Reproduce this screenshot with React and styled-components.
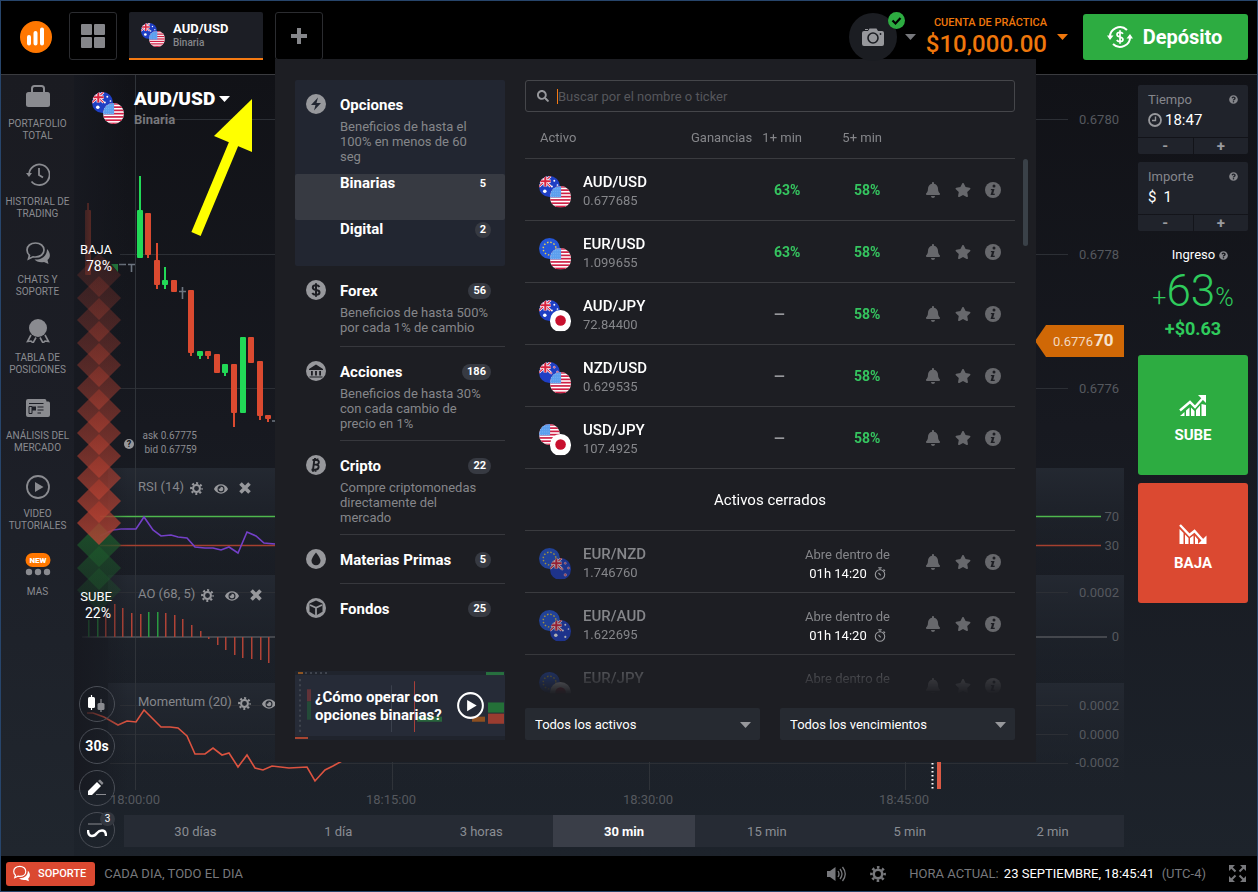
import React, { useState } from 'react'
import styled, { createGlobalStyle } from 'styled-components'
import { FaBell, FaStar, FaQuestionCircle, FaSearch, FaEye } from 'react-icons/fa'

const GlobalStyle = createGlobalStyle`
    *, *::before, *::after { box-sizing: border-box; }
    body { margin: 0; background: #000; font-family: Roboto, "Liberation Sans", sans-serif; color: #fff; }
    button, input, select { font: inherit; color: inherit; margin: 0; padding: 0; border: 0; background: none; }
    button { cursor: pointer; }
    svg { display: block; flex: none; }
`

const Page = styled.div`
    display: flex;
    flex-direction: column;
    min-height: 100vh;
    border: 1px solid #27456b;
    background: #000;
`

/* ---------- header ---------- */

const Header = styled.header`
    position: relative;
    z-index: 2;
    display: flex;
    align-items: flex-start;
    gap: 12px;
    height: 74px;
    padding: 11px 9px 0 19px;
    border-bottom: 1px solid #3a3b3f;
`

const Logo = styled.a`
    display: flex;
    align-items: center;
    height: 50px;
    margin-right: 5px;
`

const SquareButton = styled.button`
    display: grid;
    place-items: center;
    width: 48px;
    height: 48px;
    border: 1px solid #2b2c30;
    border-radius: 3px;
    color: #85868a;
`

const AssetTab = styled.button`
    display: flex;
    align-items: center;
    gap: 8px;
    width: 134px;
    height: 48px;
    padding-left: 12px;
    border-bottom: 2px solid #f57a12;
    border-radius: 2px 2px 0 0;
    background: #1c1e25;
    text-align: left;
`

const TabText = styled.span`
    display: flex;
    flex-direction: column;
    font-size: 13px;
    font-weight: 700;
    line-height: 15px;

    small {
        font-size: 10px;
        font-weight: 500;
        line-height: 14px;
        color: #85868a;
    }
`

const AddSlot = styled.div`
    position: relative;
    flex: 1;
`

const Avatar = styled.button`
    position: relative;
    display: grid;
    place-items: center;
    width: 48px;
    height: 48px;
    margin-top: 1px;
    border-radius: 50%;
    background: #1b1d22;
`

const Verified = styled.span`
    position: absolute;
    top: -1px;
    right: -8px;
`

const CaretBox = styled.span`
    display: flex;
    align-items: center;
    height: 50px;
    margin-left: -4px;
    color: ${props => props.color};
`

const Account = styled.button`
    display: flex;
    flex-direction: column;
    align-items: flex-end;
    padding-top: 4px;
    color: #ef770c;
    font-size: 11px;
    font-weight: 500;
    line-height: 14px;

    strong {
        font-size: 24px;
        font-weight: 500;
        line-height: 28px;
    }
`

const AccountGroup = styled.div`
    display: flex;
    gap: 14px;
    margin-left: -2px;
`

const Deposit = styled.button`
    display: flex;
    align-items: center;
    justify-content: center;
    gap: 10px;
    width: 165px;
    height: 46px;
    margin: 2px 0 0 3px;
    padding-right: 2px;
    border-radius: 3px;
    background: #2dac41;
    font-size: 20px;
    font-weight: 700;
`

/* ---------- sidebar ---------- */

const Body = styled.div`
    display: flex;
    flex: 1;
    background: linear-gradient(#111217, #171920 45%, #1d232b);
`

const Sidebar = styled.nav`
    flex: none;
    width: 73px;
    background: linear-gradient(#1a1b21, #1c1e26 45%, #20262e);
`

const SideLink = styled.a`
    display: flex;
    flex-direction: column;
    align-items: center;
    gap: 9px;
    height: 78px;
    padding-top: 10px;
    color: #8a8b90;
    font-size: 10px;
    line-height: 12px;
    text-align: center;
    text-decoration: none;

    span { max-width: 66px; }
`

/* ---------- chart ---------- */

const ChartColumn = styled.main`
    display: flex;
    flex-direction: column;
    position: relative;
    flex: 1;
    min-width: 0;
    padding-bottom: 9px;
`

const Chart = styled.section`
    position: relative;
    display: grid;
    flex: 1;
    grid-template-rows: 393fr 107fr 108fr 132fr;
    min-height: 740px;
`

const ChartSvg = styled.svg`
    position: absolute;
    inset: 0;
    width: 100%;
    height: 100%;
    font-size: 13px;
`

const Pane = styled.div`
    position: relative;
    display: flex;
    align-items: flex-start;
    gap: 11px;
    padding: 10px 0 0 64px;
    color: #85868b;
    font-size: 13px;
    line-height: 18px;
`

const PaneTitle = styled.span`
    margin-right: -5px;
`

const PaneButton = styled.button`
    padding-top: 4px;
    color: #97989c;
`

const PairButton = styled.button`
    position: relative;
    display: flex;
    align-items: flex-start;
    gap: 10px;
    height: 40px;
    margin: 17px 0 0 18px;
    justify-self: start;
    text-align: left;
`

const PairText = styled.span`
    display: flex;
    flex-direction: column;
    font-size: 13px;
    font-weight: 700;
    line-height: 20px;
    color: #77787c;

    strong {
        display: flex;
        align-items: center;
        gap: 4px;
        margin-top: -4px;
        font-size: 19px;
        line-height: 22px;
        color: #fff;
    }
`

const ToolDock = styled.div`
    position: absolute;
    left: 5px;
    bottom: 8px;
    display: flex;
    flex-direction: column;
    gap: 6px;
`

const ToolButton = styled.button`
    position: relative;
    display: grid;
    place-items: center;
    width: 36px;
    height: 36px;
    border: 1px solid #4a4e56;
    border-radius: 50%;
    font-size: 14px;
    font-weight: 700;
`

const ToolCount = styled.span`
    position: absolute;
    top: -1px;
    right: -1px;
    width: 15px;
    height: 14px;
    border-radius: 7px;
    background: #33373f;
    font-size: 10px;
    font-weight: 400;
    line-height: 14px;
`

const RangeBar = styled.div`
    display: flex;
    height: 32px;
    margin-left: 50px;
    background: #262b34;
`

const RangeButton = styled.button`
    flex: 1;
    background: ${props => props.$active ? '#3a3e48' : 'transparent'};
    color: ${props => props.$active ? '#fff' : '#8a8d93'};
    font-size: 13px;
    font-weight: ${props => props.$active ? 700 : 400};
`

/* ---------- trade panel ---------- */

const TradePanel = styled.aside`
    display: flex;
    flex: none;
    flex-direction: column;
    gap: 8px;
    width: 133px;
    padding: 10px 9px 0 14px;
`

const Field = styled.div`
    display: grid;
    grid-template-columns: 1fr 1fr;
    gap: 1px;
    overflow: hidden;
    border-radius: 2px;
`

const FieldTop = styled.div`
    grid-column: 1 / -1;
    height: 52px;
    padding: 4px 10px 0;
    background: #20232b;
`

const FieldLabel = styled.label`
    display: flex;
    align-items: center;
    justify-content: space-between;
    height: 20px;
    color: #85868b;
    font-size: 13px;
`

const FieldValue = styled.div`
    display: flex;
    align-items: center;
    gap: ${props => props.$gap};
    height: 22px;
    font-size: 15px;

    input {
        width: 60px;
        outline: 0;
    }
`

const StepButton = styled.button`
    height: 16px;
    background: #20232b;
    color: #9a9b9f;
    font-size: 15px;
    font-weight: 700;
    line-height: 16px;
`

const Income = styled.div`
    display: flex;
    flex-direction: column;
    align-items: center;
    height: 108px;
    padding-top: 7px;
    color: #2fcb5c;
    font-size: 18px;
    font-weight: 700;
`

const IncomeLabel = styled.span`
    display: flex;
    align-items: center;
    gap: 4px;
    margin-left: 14px;
    color: #fff;
    font-size: 13px;
    font-weight: 400;
    line-height: 18px;

    svg { color: #8a8b90; }
`

const IncomeValue = styled.span`
    font-size: 25px;
    font-weight: 300;
    line-height: 30px;

    b {
        font-size: 44px;
        font-weight: 300;
        line-height: 54px;
    }
`

const TradeButton = styled.button`
    display: flex;
    flex-direction: column;
    align-items: center;
    justify-content: center;
    gap: 9px;
    height: 120px;
    padding-top: 8px;
    border-radius: 3px;
    background: ${props => props.$up ? '#2dac41' : '#db4931'};
    color: #fff;
    font-size: 15px;
    font-weight: 700;
`

/* ---------- asset popup ---------- */

const Popup = styled.section`
    position: absolute;
    top: 47px;
    left: 0;
    display: grid;
    grid-template-columns: 210px 1fr;
    gap: 20px;
    width: calc(100vw - 497px);
    min-width: 761px;
    padding: 21px 21px 22px 20px;
    background: #1d1e23;
`

const Categories = styled.div`
    display: flex;
    flex-direction: column;
`

const OpenGroup = styled.div`
    border-radius: 2px;
    background: #222631;
`

const Category = styled.button`
    display: grid;
    grid-template-columns: 20px 1fr;
    column-gap: 14px;
    width: 100%;
    padding: 15px 0 0 11px;
    text-align: left;

    > svg { margin-top: -1px; }
`

const CategoryText = styled.span`
    display: block;
    padding-bottom: ${props => props.$short ? '13px' : '9px'};
    border-bottom: 1px solid ${props => props.$line ? '#37383d' : 'transparent'};
`

const CategoryTitle = styled.span`
    display: flex;
    align-items: center;
    justify-content: space-between;
    height: 20px;
    padding-right: 14px;
    font-size: 15px;
    font-weight: 700;
`

const CategoryNote = styled.span`
    display: block;
    min-height: 32px;
    margin-top: 4px;
    padding-right: 15px;
    color: #85868a;
    font-size: 13px;
    line-height: 15px;
`

const SubCategory = styled.button`
    display: flex;
    justify-content: space-between;
    width: 100%;
    height: 46px;
    padding: 0 14px 0 45px;
    border-radius: 2px;
    background: ${props => props.$active ? '#373a42' : 'transparent'};
    font-size: 15px;
    font-weight: 700;
    line-height: 18px;
`

const Badge = styled.span`
    min-width: 16px;
    height: 16px;
    padding: 0 5px;
    border-radius: 8px;
    background: ${props => props.$flat ? 'transparent' : '#373a42'};
    font-size: 11px;
    font-weight: 700;
    line-height: 16px;
    text-align: center;
`

const SubBadge = styled(Badge)`
    margin-top: 2px;
`

const Video = styled.button`
    position: relative;
    display: flex;
    align-items: center;
    justify-content: space-between;
    height: 69px;
    margin-top: auto;
    padding: 0 21px 0 20px;
    overflow: hidden;
    background: #262b37;
    font-size: 15px;
    font-weight: 700;
    line-height: 18px;
    text-align: left;
    white-space: nowrap;

    span, svg { position: relative; }
`

const VideoArt = styled.svg`
    && {
        position: absolute;
        inset: 0;
        width: 100%;
        height: 100%;
    }
`

const Assets = styled.div`
    position: relative;
    display: flex;
    flex-direction: column;
`

const Search = styled.label`
    display: flex;
    align-items: center;
    gap: 8px;
    height: 32px;
    padding: 0 11px;
    border: 1px solid #45464a;
    border-radius: 3px;
    color: #97989c;

    input {
        flex: 1;
        height: 15px;
        border-left: 1px solid #f57a12;
        outline: 0;
        font-size: 13px;
        line-height: 15px;
    }

    input::placeholder { color: #56575c; opacity: 1; }
`

const ListArea = styled.div`
    height: 588px;
    overflow: hidden;
    mask-image: linear-gradient(#000 538px, transparent 582px);
`

const Table = styled.table`
    width: 100%;
    border-collapse: separate;
    border-spacing: 0;
    table-layout: fixed;
    font-size: 13px;

    col:nth-child(2) { width: 120px; }
    col:nth-child(3) { width: 88px; }
    col:nth-child(4) { width: 125px; }
`

const HeadCell = styled.th`
    height: 47px;
    padding: ${props => props.$pad || '0'};
    padding-top: 4px;
    border-bottom: 1px solid #3a3b3f;
    color: #85868a;
    font-weight: 400;
    text-align: ${props => props.$right ? 'right' : 'left'};
    white-space: nowrap;

    span { margin-left: 7px; }
`

const Cell = styled.td`
    height: 62px;
    padding: ${props => props.$pad || '0'};
    border-bottom: 1px solid #3a3b3f;
    text-align: ${props => props.$right ? 'right' : 'left'};
`

const AssetCell = styled.div`
    display: flex;
    align-items: center;
    gap: 12px;
    min-height: 41px;
    padding: 4px 0 0 14px;
    color: #85868a;
    line-height: 19px;

    > div { min-height: 37px; }

    strong {
        display: block;
        color: ${props => props.$closed ? '#85868a' : '#fff'};
        font-size: 15px;
        font-weight: 500;
        line-height: 18px;
    }

    > span:first-child { opacity: ${props => props.$closed ? 0.65 : 1}; }
`

const Profit = styled.span`
    display: inline-block;
    width: 28px;
    color: ${props => props.$none ? '#97989c' : '#35c45f'};
    font-size: 14px;
    font-weight: 700;
    text-align: left;
`

const Opens = styled.div`
    display: inline-block;
    min-height: 42px;
    padding-top: 4px;
    color: #85868a;
    line-height: 19px;
    text-align: center;

    time {
        display: flex;
        align-items: center;
        justify-content: center;
        gap: 7px;
        color: #fff;
    }

    svg { color: #97989c; }
`

const Actions = styled.div`
    display: flex;
    gap: 14px;
    padding-left: 35px;
    color: #67686c;
`

const ClosedTitle = styled.td`
    height: 62px;
    border-bottom: 1px solid #3a3b3f;
    font-size: 15px;
    text-align: center;
`

const Thumb = styled.span`
    position: absolute;
    top: 79px;
    right: -13px;
    width: 5px;
    height: 87px;
    border-radius: 3px;
    background: #3a4148;
`

const Filters = styled.div`
    display: grid;
    grid-template-columns: 1fr 1fr;
    gap: 20px;
    padding-top: 8px;
`

const Filter = styled.div`
    position: relative;

    select {
        width: 100%;
        height: 32px;
        padding: 0 10px;
        border-radius: 2px;
        appearance: none;
        background: #262a31;
        font-size: 13px;
    }

    svg {
        position: absolute;
        top: 14px;
        right: 9px;
        color: #97989c;
        pointer-events: none;
    }
`

/* ---------- footer ---------- */

const Footer = styled.footer`
    display: flex;
    align-items: center;
    gap: 9px;
    height: 35px;
    padding: 0 11px 0 5px;
    color: #77787c;
    font-size: 13px;
`

const Support = styled.button`
    display: flex;
    align-items: center;
    gap: 8px;
    height: 24px;
    padding: 0 9px 0 7px;
    border-radius: 3px;
    background: #db4931;
    color: #fff;
    font-size: 11px;
    font-weight: 500;
`

const FooterRight = styled.div`
    display: flex;
    align-items: center;
    gap: 23px;
    margin-left: auto;
`

const Clock = styled.span`
    b {
        margin: 0 4px 0 2px;
        color: #fff;
        font-weight: 400;
    }
`

/* ---------- flags ---------- */

const FlagStack = styled.span`
    display: grid;
    flex: none;
    width: ${props => props.$size}px;
    height: ${props => props.$size}px;

    > svg {
        grid-area: 1 / 1;
        width: 66%;
        height: 66%;
        border-radius: 50%;
    }

    > svg:last-child {
        align-self: end;
        justify-self: end;
    }
`

const Jack = () => (
    <g>
        <path d="M0 0L11 10M11 0L0 10" stroke="#fff" strokeWidth="2.4" />
        <path d="M0 0L11 10M11 0L0 10" stroke="#d8223f" strokeWidth="1" />
        <path d="M6 0V10M0 5H11" stroke="#fff" strokeWidth="3.4" />
        <path d="M6 0V10M0 5H11" stroke="#d8223f" strokeWidth="2" />
    </g>
)

function Flag({ code }) {
    return (
        <svg viewBox="0 0 20 20" aria-hidden="true">
            {code === 'USD' && (
                <>
                    <rect width="20" height="20" fill="#fff" />
                    {[0, 1, 2, 3, 4, 5, 6].map(i => <rect key={i} y={i * 3.1} width="20" height="1.6" fill="#d01f45" />)}
                    <rect width="10.5" height="10.8" fill="#5c9fee" />
                    <path d="M1 2.5H10M1 5H10M1 7.5H10M1 10H10" stroke="#86b9f5" strokeWidth="0.8" strokeDasharray="0.8 1.2" />
                </>
            )}
            {code === 'AUD' && (
                <>
                    <rect width="20" height="20" fill="#1f3fc4" />
                    <Jack />
                    <g fill="#fff">
                        <circle cx="5.5" cy="14.5" r="1.7" />
                        <circle cx="14.5" cy="4.5" r="0.9" />
                        <circle cx="17.5" cy="8.5" r="0.8" />
                        <circle cx="12.2" cy="10" r="0.9" />
                        <circle cx="14.5" cy="16" r="1" />
                    </g>
                </>
            )}
            {code === 'NZD' && (
                <>
                    <rect width="20" height="20" fill="#1f3fc4" />
                    <Jack />
                    <g fill="#e0486a" stroke="#fff" strokeWidth="0.4">
                        <circle cx="14.5" cy="5" r="1" />
                        <circle cx="17.5" cy="9.5" r="1" />
                        <circle cx="11.5" cy="10.5" r="1" />
                        <circle cx="14.5" cy="16" r="1.2" />
                    </g>
                </>
            )}
            {code === 'EUR' && (
                <>
                    <rect width="20" height="20" fill="#2456d8" />
                    <circle cx="10" cy="10" r="6" fill="none" stroke="#e8cf4a" strokeWidth="1.4" strokeDasharray="1.4 1.74" />
                </>
            )}
            {code === 'JPY' && (
                <>
                    <rect width="20" height="20" fill="#fff" />
                    <circle cx="10" cy="10" r="5" fill="#c8102e" />
                </>
            )}
        </svg>
    )
}

const FlagPair = ({ pair, size = 32 }) => (
    <FlagStack $size={size}>
        {pair.split('/').map(code => <Flag key={code} code={code} />)}
    </FlagStack>
)

/* ---------- icons ---------- */

const Caret = () => <svg width="11" height="6" viewBox="0 0 11 6"><path d="M0 0H11L5.5 6Z" fill="currentColor" /></svg>

const LogoIcon = () => (
    <svg width="32" height="32" viewBox="0 0 32 32">
        <circle cx="16" cy="16" r="16" fill="#ff7700" />
        <path d="M9 16V22.5M15.5 12V22.5M22 8.5V22.5" stroke="#fff" strokeWidth="4" strokeLinecap="round" />
    </svg>
)

const GearIcon = ({ size }) => (
    <svg width={size} height={size} viewBox="0 0 14 14" fill="none" stroke="currentColor">
        <circle cx="7" cy="7" r="3.700" strokeWidth="2.200" />
        <circle cx="7" cy="7" r="5.800" strokeWidth="2.200" strokeDasharray="2.200 2.355" strokeDashoffset="1.100" />
    </svg>
)

const CloseIcon = () => (
    <svg width="12" height="12" viewBox="0 0 12 12">
        <path d="M1.500 1.500L10.500 10.500M10.500 1.500L1.500 10.500" stroke="currentColor" strokeWidth="3.600" />
    </svg>
)

const InfoIcon = () => (
    <svg width="16" height="16" viewBox="0 0 16 16">
        <circle cx="8" cy="8" r="8" fill="currentColor" />
        <circle cx="9" cy="4" r="1.500" fill="#1d1e23" />
        <path d="M6 7H9.500L8.200 11.800H10L9.500 13H5.500L7 8.200H5.700Z" fill="#1d1e23" />
    </svg>
)

const ChatIcon = ({ size = 24 }) => (
    <svg width={size} height={size} viewBox="0 0 24 24">
        <path d="M21 8C25 12 24.500 17 21.500 19L22.500 23L18 21C14 22 10 20.500 8.500 18.500C16 19 21 15 21 8Z" fill="currentColor" />
        <path d="M9.500 2C4.500 2 1 5 1 9C1 11.200 2 13 3.500 14.300L2.500 18L7 15.800C7.800 16 8.600 16 9.500 16C14.500 16 18 13 18 9S14.500 2 9.500 2Z" fill="none" stroke="currentColor" strokeWidth="1.700" />
    </svg>
)

const PlayIcon = ({ size }) => (
    <svg width={size} height={size} viewBox="0 0 24 24">
        <circle cx="12" cy="12" r="11" fill="none" stroke="currentColor" strokeWidth="1.800" />
        <path d="M9 7L17.500 12L9 17Z" fill="currentColor" />
    </svg>
)

const sideIcons = {
    case: (
        <svg width="24" height="24" viewBox="0 0 24 24">
            <rect y="7" width="24" height="15" rx="2.5" fill="currentColor" />
            <path d="M6 8V3.500Q6 1 8.500 1H15.500Q18 1 18 3.500V8" fill="none" stroke="currentColor" strokeWidth="2" />
        </svg>
    ),
    history: (
        <svg width="24" height="24" viewBox="0 0 24 24" fill="none" stroke="currentColor" strokeWidth="1.800">
            <path d="M3 11A10.300 10.300 0 1 1 5.500 18.500" />
            <path d="M13 5V12L17 14.500" />
            <path d="M0 10H6L3 14Z" fill="currentColor" stroke="none" />
        </svg>
    ),
    chat: <ChatIcon />,
    award: (
        <svg width="24" height="24" viewBox="0 0 24 24">
            <circle cx="12" cy="9" r="9" fill="currentColor" />
            <path d="M5 16L1.500 22.500L5 22L7 24L10 18.500M19 16L22.500 22.500L19 22L17 24L14 18.500" fill="none" stroke="currentColor" strokeWidth="1.600" />
        </svg>
    ),
    news: (
        <svg width="24" height="24" viewBox="0 0 24 24">
            <path d="M2 2H19Q20.500 2 20.500 4.500H22.500Q24 4.500 24 6.500V18Q24 20 22 20H2Q0 20 0 18V4Q0 2 2 2Z" fill="currentColor" />
            <path d="M3 6.500H17.500M11.500 10H17.500M11.500 13H17.500M11.500 16H15" stroke="#1c1e26" strokeWidth="1.200" />
            <path d="M3 9.500H6V16.500H3Z" fill="currentColor" stroke="#1c1e26" strokeWidth="1" />
            <rect x="6" y="9.500" width="4" height="4" fill="#1c1e26" />
        </svg>
    ),
    play: <PlayIcon size={24} />,
    more: (
        <svg width="26" height="24" viewBox="0 0 26 24">
            <rect x="0.500" y="0" width="25" height="14" rx="7" fill="#ff7700" />
            <text x="13" y="10" fill="#fff" fontSize="8" fontWeight="900" textAnchor="middle">NEW</text>
            <g fill="currentColor">
                <circle cx="4" cy="19" r="3.200" />
                <circle cx="13" cy="19" r="3.200" />
                <circle cx="22" cy="19" r="3.200" />
            </g>
        </svg>
    ),
}

const TrendIcon = ({ up }) => (
    <svg width="28" height="22" viewBox="0 0 28 22">
        {up ? (
            <>
                <path d="M1 15.500L11 7L16 12L24 3" fill="none" stroke="currentColor" strokeWidth="2.400" />
                <path d="M19 0H27V8Z" fill="currentColor" />
                <path d="M1 21L5.500 17V21ZM7 21V15.500L10.500 12.500V21ZM12 21V12.500L15.500 16V21ZM17 21V15L21 10.500V21ZM22.500 21V9L27 10V21Z" fill="currentColor" />
            </>
        ) : (
            <>
                <path d="M1 2L10.500 12L15.500 8L24 17.500" fill="none" stroke="currentColor" strokeWidth="2.400" />
                <path d="M19 21H27.500V12.500Z" fill="currentColor" />
                <path d="M0.500 21V6L4.500 10V21ZM6 21V11.500L9.500 15V21ZM11 21V15L14.500 12.500V21ZM16 21V13L19 16.500V21Z" fill="currentColor" />
            </>
        )}
    </svg>
)

const categoryShapes = {
    bolt: <path d="M12 3.500L5 11H9.500L8 16.500L15 9H10.500Z" fill="#222631" />,
    dollar: <path d="M13.500 7Q12.500 5.300 10 5.300Q6.800 5.300 6.800 7.600Q6.800 9.600 10 10Q13.500 10.400 13.500 12.400Q13.500 14.700 10 14.700Q7.300 14.700 6.300 12.900M10 3.300V16.700" fill="none" stroke="#1d1e23" strokeWidth="2" />,
    bank: <path d="M3 8L10 3.500L17 8V9H3ZM5 10H6.800V14.500H5ZM9.100 10H10.900V14.500H9.100ZM13.200 10H15V14.500H13.200ZM3.500 15.500H16.500V16.500H3.500Z" fill="#1d1e23" />,
    bitcoin: <path d="M6.500 5H10.500Q13.300 5.300 12.800 7.600Q12.400 9.500 9.500 9.600Q13 9.700 12.600 12.300Q12 15 8.500 14.800H5.500M8.300 5L7 14.800M9 3V5M11.500 3.400V5M7 14.800V16.800M9.500 14.800V16.800M7.500 9.600H10" fill="none" stroke="#1d1e23" strokeWidth="1.900" />,
    drop: <path d="M10 3.500Q14.500 9 14.500 11.800A4.500 4.500 0 0 1 5.500 11.800Q5.500 9 10 3.500Z" fill="#1d1e23" />,
    cube: <path d="M4 7L10 9.700L16 7M10 9.700V18" fill="none" stroke="#97989c" strokeWidth="1.800" />,
}

const CategoryIcon = ({ shape }) => (
    <svg width="20" height="20" viewBox="0 0 20 20">
        <circle cx="10" cy="10" r="10" fill="#97989c" />
        {shape === 'cube' && <path d="M10 2.500L16.500 5.500V13.800L10 17.500L3.500 13.800V5.500Z" fill="#1d1e23" />}
        {categoryShapes[shape]}
    </svg>
)

const StopwatchIcon = () => (
    <svg width="12" height="13" viewBox="0 0 12 13" fill="none" stroke="currentColor" strokeWidth="1.100">
        <circle cx="6" cy="7.500" r="4.700" />
        <path d="M4.200 0.800H7.800M6 1V3M9.500 2.500L11 4M4.500 6L6.800 8.300" />
    </svg>
)

/* ---------- data ---------- */

const sideItems = [
    ['case', 'PORTAFOLIO TOTAL'],
    ['history', 'HISTORIAL DE TRADING'],
    ['chat', 'CHATS Y SOPORTE'],
    ['award', 'TABLA DE POSICIONES'],
    ['news', 'ANÁLISIS DEL MERCADO'],
    ['play', 'VIDEO TUTORIALES'],
    ['more', 'MAS'],
]

const categories = [
    { shape: 'dollar', title: 'Forex', count: 56, note: 'Beneficios de hasta 500% por cada 1% de cambio' },
    { shape: 'bank', title: 'Acciones', count: 186, note: 'Beneficios de hasta 30% con cada cambio de precio en 1%' },
    { shape: 'bitcoin', title: 'Cripto', count: 22, note: 'Compre criptomonedas directamente del mercado' },
    { shape: 'drop', title: 'Materias Primas', count: 5 },
    { shape: 'cube', title: 'Fondos', count: 25 },
]

const openAssets = [
    ['AUD/USD', '0.677685', '63%', '58%'],
    ['EUR/USD', '1.099655', '63%', '58%'],
    ['AUD/JPY', '72.84400', '', '58%'],
    ['NZD/USD', '0.629535', '', '58%'],
    ['USD/JPY', '107.4925', '', '58%'],
]

const closedAssets = [
    ['EUR/NZD', '1.746760', '01h 14:20'],
    ['EUR/AUD', '1.622695', '01h 14:20'],
    ['EUR/JPY'],
]

const ranges = ['30 días', '1 día', '3 horas', '30 min', '15 min', '5 min', '2 min']

// x, wick top, wick bottom, body top, body bottom, colour
const candles = [
    [88, 203, 275, 210, 275, 'r'],
    [140, 176, 258, 210, 258, 'g'],
    [148, 213, 258, 213, 255, 'r'],
    [157, 243, 289, 260, 285, 'r'],
    [165, 267, 289, 280, 285, 'g'],
    [174, 280, 292, 280, 292, 'r'],
    [191, 290, 356, 290, 353, 'r'],
    [200, 351, 359, 351, 356, 'g'],
    [208, 351, 359, 351, 356, 'r'],
    [217, 354, 373, 354, 373, 'r'],
    [225, 364, 376, 364, 373, 'g'],
    [234, 364, 427, 364, 413, 'r'],
    [243, 337, 413, 337, 413, 'g'],
    [251, 337, 363, 337, 363, 'r'],
    [260, 361, 420, 361, 416, 'r'],
    [268, 415, 422, 415, 419, 'r'],
]

const aoBars = [
    [88, 620, 'g'], [97, 618, 'g'], [105, 612], [114, 604], [122, 608], [131, 613], [140, 614], [148, 612, 'g'],
    [157, 612, 'g'], [165, 613], [174, 615], [182, 619], [191, 625], [200, 631], [208, 639], [217, 645], [225, 650],
    [234, 655], [242, 658], [251, 659], [260, 660], [268, 663],
]

const redDiamonds = [275, 298, 320, 343, 365, 388, 411, 433, 456, 478, 501, 523]
const greenDiamonds = [590, 568, 545]

const candleColor = { r: '#db4a30', g: '#22d957' }

const diamond = y => `M77 ${y}L99 ${y - 22}L121 ${y}L99 ${y + 22}Z`

function ChartDrawing() {
    return (
        <ChartSvg viewBox="74 75 1050 740" preserveAspectRatio="xMidYMin meet">
            <defs>
                <linearGradient id="pane" x2="0" y2="1">
                    <stop offset="0" stopColor="#252a33" stopOpacity="0.9" />
                    <stop offset="1" stopColor="#1d222a" stopOpacity="0.1" />
                </linearGradient>
                <linearGradient id="fade">
                    <stop offset="0" stopColor="#171920" />
                    <stop offset="1" stopColor="#171920" stopOpacity="0" />
                </linearGradient>
                <linearGradient id="red" x2="0" y2="1">
                    <stop offset="0" stopColor="#a83a2c" stopOpacity="0.75" />
                    <stop offset="1" stopColor="#c04838" stopOpacity="0.9" />
                </linearGradient>
                <linearGradient id="green" x2="0" y2="1">
                    <stop offset="0" stopColor="#1d5c2c" stopOpacity="0.9" />
                    <stop offset="1" stopColor="#1e5a2c" stopOpacity="0.6" />
                </linearGradient>
            </defs>

            <g fill="url(#pane)">
                <rect x="108" y="468" width="1016" height="107" />
                <rect x="108" y="575" width="1016" height="108" />
                <rect x="108" y="683" width="1016" height="107" />
            </g>

            <path d="M160 119.500H1068M120 254.500H1068M120 388.500H1068M74 592.500H1068M120 705.500H1068M110 734.500H1068M110 763.500H1068" stroke="#2c2f35" />
            <path d="M135.500 75V790M392.500 75V790M649.500 75V790M905.500 75V790" stroke="#2f3339" />
            <path d="M82 637H1107" stroke="#44474d" strokeWidth="2" />
            <path d="M100 516.500H1101" stroke="#4fb84e" strokeWidth="1.600" />
            <path d="M100 545.500H1101" stroke="#a5402f" strokeWidth="1.600" />

            <g fill="#55585e" textAnchor="end">
                <text x="1119" y="124">0.6780</text>
                <text x="1119" y="259">0.6778</text>
                <text x="1119" y="393">0.6776</text>
                <text x="1119" y="521">70</text>
                <text x="1119" y="550">30</text>
                <text x="1119" y="597">0.0002</text>
                <text x="1119" y="641">0</text>
                <text x="1119" y="710">0.0002</text>
                <text x="1119" y="739">0.0000</text>
                <text x="1119" y="767">-0.0002</text>
            </g>
            <g fill="#55585e" textAnchor="middle">
                <text x="135" y="804">18:00:00</text>
                <text x="391" y="804">18:15:00</text>
                <text x="648" y="804">18:30:00</text>
                <text x="904" y="804">18:45:00</text>
            </g>

            {aoBars.map(([x, y, color]) => (
                <rect key={x} x={x} y={Math.min(y, 637)} width="1.5" height={Math.abs(637 - y)} fill={color ? '#2a9a41' : '#b04336'} />
            ))}
            <polyline fill="none" stroke="#7440c8" strokeWidth="1.6" points="100,536 113,530 121,529 136,529 144,517 153,530 161,536 171,535 178,537 187,538 195,547 205,548 213,548 221,550 229,547 238,553 247,532 256,536 264,543 275,544" />
            <polyline fill="none" stroke="#dc5340" strokeWidth="1.6" points="87,713 93,713 104,717 118,725 127,721 136,722 144,710 161,727 170,727 178,728 187,736 195,754 205,754 213,748 222,755 229,753 238,767 247,755 255,768 263,770 272,766 289,768 307,767 315,781 325,770 333,766 342,761 350,758" />

            {candles.map(([x, top, bottom, bodyTop, bodyBottom, color]) => (
                <g key={x} fill={candleColor[color]}>
                    <rect x={x - 1} y={top} width="2" height={bottom - top} />
                    <rect x={x - 3} y={bodyTop} width="6" height={bodyBottom - bodyTop} rx="1" />
                </g>
            ))}
            <path d="M179 291.500H186M182.500 287V299M119 264.500H126M128 264.500H135M131.500 264V272M272 421H275" stroke="#6d7580" strokeWidth="1.600" />
            <path d="M111 264H118V272Z" fill="#258a41" />
            <rect x="74" y="75" width="54" height="715" fill="url(#fade)" />

            {greenDiamonds.map((y, i) => <path key={y} d={diamond(y)} fill="url(#green)" opacity={0.4 + i * 0.25} />)}
            {redDiamonds.map((y, i) => <path key={y} d={diamond(y)} fill="url(#red)" opacity={0.26 + i * 0.055} />)}

            <g fill="#fff" textAnchor="end">
                <text x="112" y="254">BAJA</text>
                <text x="112" y="271" fontSize="14">78%</text>
                <text x="112" y="601">SUBE</text>
                <text x="111" y="618" fontSize="14">22%</text>
            </g>
            <g fill="#8a8b90" fontSize="10" textAnchor="end">
                <text x="197" y="439">ask 0.67775</text>
                <text x="197" y="453">bid 0.67759</text>
            </g>
            <circle cx="129" cy="444" r="5" fill="#97989c" />
            <text x="129" y="447" fontSize="9" fontWeight="700" textAnchor="middle" fill="#171920">?</text>

            <path d="M932.500 763V790" stroke="#fff" strokeWidth="2" strokeDasharray="1.500 2.500" />
            <rect x="937" y="760" width="4" height="29" fill="#db5a45" />

            <path d="M1035 341L1046 325H1124V357H1046Z" fill="#d06806" />
            <text x="1053" y="346" fill="#f3d9c0">0.6776</text>
            <text x="1094" y="346" fill="#f7e2cd" fontSize="17" fontWeight="700">70</text>

            <path d="M196 234L234 143" stroke="#ffff00" strokeWidth="10" />
            <path d="M252 99L214 136L252 152Z" fill="#ffff00" />
        </ChartSvg>
    )
}

const Indicator = ({ title, closable = true }) => (
    <Pane>
        <PaneTitle>{title}</PaneTitle>
        <PaneButton aria-label="Ajustes"><GearIcon size={13} /></PaneButton>
        <PaneButton aria-label="Mostrar"><FaEye size={14} /></PaneButton>
        {closable && <PaneButton aria-label="Quitar"><CloseIcon /></PaneButton>}
    </Pane>
)

const RowActions = () => (
    <Actions>
        <button aria-label="Alerta"><FaBell size={16} /></button>
        <button aria-label="Favorito"><FaStar size={16} /></button>
        <button aria-label="Información"><InfoIcon /></button>
    </Actions>
)

const AssetName = ({ name, price, closed }) => (
    <AssetCell $closed={closed}>
        <FlagPair pair={name} />
        <div><strong>{name}</strong>{price}</div>
    </AssetCell>
)

function AssetPopup() {
    return (
        <Popup>
            <Categories>
                <OpenGroup>
                    <Category>
                        <CategoryIcon shape="bolt" />
                        <CategoryText>
                            <CategoryTitle>Opciones</CategoryTitle>
                            <CategoryNote>Beneficios de hasta el 100% en menos de 60 seg</CategoryNote>
                        </CategoryText>
                    </Category>
                    <SubCategory $active>Binarias<SubBadge $flat>5</SubBadge></SubCategory>
                    <SubCategory>Digital<SubBadge>2</SubBadge></SubCategory>
                </OpenGroup>
                {categories.map((item, i) => (
                    <Category key={item.title}>
                        <CategoryIcon shape={item.shape} />
                        <CategoryText $line={i < categories.length - 1} $short={!item.note}>
                            <CategoryTitle>{item.title}<Badge>{item.count}</Badge></CategoryTitle>
                            {item.note && <CategoryNote>{item.note}</CategoryNote>}
                        </CategoryText>
                    </Category>
                ))}
                <Video>
                    <VideoArt viewBox="0 0 210 68" preserveAspectRatio="none">
                        <path d="M0 0H210V4H0ZM0 64H210V68H0Z" fill="#20242d" />
                        <rect x="3" y="1" width="5" height="2" fill="#8f5522" />
                        <rect y="65" width="13" height="2" fill="#a84632" />
                        <path d="M10 2H32M5 8V60" stroke="#3f444e" strokeWidth="2" strokeDasharray="2 3" />
                        <rect x="12" y="18" width="4" height="12" fill="#613238" />
                        <rect x="12" y="30" width="4" height="18" fill="#234a38" />
                        <path d="M119.500 10V60" stroke="#a8403a" />
                        <path d="M96.500 14V60" stroke="#3b414d" />
                        <rect x="122" y="45" width="25" height="5" fill="#28663c" />
                        <rect x="177" y="45" width="13" height="5" fill="#8d4f20" />
                        <rect x="191" y="1" width="18" height="3" fill="#27703f" />
                        <rect x="193" y="31" width="16" height="10" fill="#247038" />
                        <rect x="193" y="42" width="16" height="10" fill="#9a3c30" />
                    </VideoArt>
                    <span>¿Cómo operar con<br />opciones binarias?</span>
                    <PlayIcon size={27} />
                </Video>
            </Categories>

            <Assets>
                <Search>
                    <FaSearch size={12} />
                    <input type="text" aria-label="Buscar" placeholder="Buscar por el nombre o ticker" />
                </Search>
                <ListArea>
                    <Table>
                        <colgroup><col /><col /><col /><col /></colgroup>
                        <thead>
                            <tr>
                                <HeadCell $pad="0 0 0 15px">Activo</HeadCell>
                                <HeadCell $right>Ganancias <span>1+ min</span></HeadCell>
                                <HeadCell $right $pad="0 8px 0 0">5+ min</HeadCell>
                                <HeadCell aria-label="Acciones" />
                            </tr>
                        </thead>
                        <tbody>
                            {openAssets.map(([name, price, short, long]) => (
                                <tr key={name}>
                                    <Cell><AssetName name={name} price={price} /></Cell>
                                    <Cell $right><Profit $none={!short}>{short || '—'}</Profit></Cell>
                                    <Cell $right $pad="0 8px 0 0"><Profit>{long}</Profit></Cell>
                                    <Cell><RowActions /></Cell>
                                </tr>
                            ))}
                            <tr><ClosedTitle colSpan={4}>Activos cerrados</ClosedTitle></tr>
                            {closedAssets.map(([name, price, opensIn]) => (
                                <tr key={name}>
                                    <Cell><AssetName name={name} price={price} closed /></Cell>
                                    <Cell $right colSpan={2}>
                                        <Opens>
                                            Abre dentro de
                                            {opensIn && <time>{opensIn} <StopwatchIcon /></time>}
                                        </Opens>
                                    </Cell>
                                    <Cell><RowActions /></Cell>
                                </tr>
                            ))}
                        </tbody>
                    </Table>
                </ListArea>
                <Thumb />
                <Filters>
                    <Filter>
                        <select aria-label="Activos"><option>Todos los activos</option></select>
                        <Caret />
                    </Filter>
                    <Filter>
                        <select aria-label="Vencimientos"><option>Todos los vencimientos</option></select>
                        <Caret />
                    </Filter>
                </Filters>
            </Assets>
        </Popup>
    )
}

function App() {
    const [range, setRange] = useState('30 min')
    const [time, setTime] = useState('18:47')
    const [amount, setAmount] = useState('1')

    return (
        <Page>
            <GlobalStyle />
            <Header>
                <Logo href="#" aria-label="Inicio"><LogoIcon /></Logo>
                <SquareButton aria-label="Vistas">
                    <svg width="24" height="24" viewBox="0 0 24 24" fill="currentColor">
                        <rect width="11" height="11" rx="1" />
                        <rect x="13" width="11" height="11" rx="1" />
                        <rect y="13" width="11" height="11" rx="1" />
                        <rect x="13" y="13" width="11" height="11" rx="1" />
                    </svg>
                </SquareButton>
                <AssetTab>
                    <FlagPair pair="AUD/USD" size={24} />
                    <TabText>AUD/USD<small>Binaria</small></TabText>
                </AssetTab>
                <AddSlot>
                    <SquareButton aria-label="Agregar">
                        <svg width="16" height="16" viewBox="0 0 16 16"><path d="M8 0V16M0 8H16" stroke="currentColor" strokeWidth="4" /></svg>
                    </SquareButton>
                    <AssetPopup />
                </AddSlot>
                <Avatar aria-label="Perfil">
                    <svg width="22" height="19" viewBox="0 0 22 19">
                        <path d="M2 3H6L7.500 0.500H14.500L16 3H20Q22 3 22 5V16Q22 18 20 18H2Q0 18 0 16V5Q0 3 2 3ZM3 1H6V2H3Z" fill="#97989c" />
                        <circle cx="11" cy="10" r="5" fill="#97989c" stroke="#1b1d22" strokeWidth="1.600" />
                        <circle cx="18.500" cy="6" r="0.900" fill="#1b1d22" />
                    </svg>
                    <Verified>
                        <svg width="17" height="17" viewBox="0 0 17 17">
                            <circle cx="8.500" cy="8.500" r="8.500" fill="#2dac41" />
                            <path d="M4.500 8.500L7.500 11.500L12.500 6" fill="none" stroke="#000" strokeWidth="2.200" />
                        </svg>
                    </Verified>
                </Avatar>
                <CaretBox color="#77787c"><Caret /></CaretBox>
                <AccountGroup>
                    <Account>CUENTA DE PRÁCTICA<strong>$10,000.00</strong></Account>
                    <CaretBox color="#ef770c"><Caret /></CaretBox>
                </AccountGroup>
                <Deposit>
                    <svg width="26" height="24" viewBox="0 0 26 24" fill="none" stroke="currentColor" strokeWidth="2">
                        <path d="M3 13A10 10 0 0 1 20 5M23 11A10 10 0 0 1 6 19" />
                        <path d="M0 10.500H6.500L3 15ZM19.500 13.500H26L23 9Z" fill="currentColor" stroke="none" />
                        <path d="M16 8.800Q15 7.300 13 7.300Q10 7.300 10 9.500Q10 11.400 13 12Q16 12.600 16 14.500Q16 16.700 13 16.700Q10.700 16.700 9.800 15M13 5.300V18.700" strokeWidth="1.700" />
                    </svg>
                    Depósito
                </Deposit>
            </Header>

            <Body>
                <Sidebar>
                    {sideItems.map(([icon, label]) => (
                        <SideLink href="#" key={icon}>{sideIcons[icon]}<span>{label}</span></SideLink>
                    ))}
                </Sidebar>

                <ChartColumn>
                    <Chart>
                        <ChartDrawing />
                        <PairButton>
                            <FlagPair pair="AUD/USD" />
                            <PairText><strong>AUD/USD <Caret /></strong>Binaria</PairText>
                        </PairButton>
                        <Indicator title="RSI (14)" />
                        <Indicator title="AO (68, 5)" />
                        <Indicator title="Momentum (20)" closable={false} />
                    </Chart>
                    <RangeBar>
                        {ranges.map(item => (
                            <RangeButton key={item} $active={item === range} onClick={() => setRange(item)}>{item}</RangeButton>
                        ))}
                    </RangeBar>
                    <ToolDock>
                        <ToolButton aria-label="Tipo de gráfico">
                            <svg width="20" height="20" viewBox="0 0 20 20">
                                <path d="M4.500 1V16" stroke="#fff" strokeWidth="1.200" />
                                <rect x="1" y="3" width="7" height="11" rx="1.500" fill="#fff" />
                                <path d="M14 5V18" stroke="#8a8b90" strokeWidth="1.200" />
                                <rect x="10.500" y="9" width="7" height="7" rx="1.500" fill="#8a8b90" />
                            </svg>
                        </ToolButton>
                        <ToolButton>30s</ToolButton>
                        <ToolButton aria-label="Dibujar">
                            <svg width="20" height="18" viewBox="0 0 20 18">
                                <path d="M1 16V12L10 3L14 7L5 16Z" fill="#fff" />
                                <path d="M11 2L13 0.500L16.500 4L15 6Z" fill="#8a8b90" />
                                <path d="M9 15.500H19" stroke="#8a8b90" />
                            </svg>
                        </ToolButton>
                        <ToolButton aria-label="Indicadores">
                            <svg width="20" height="16" viewBox="0 0 20 16">
                                <path d="M1 2H15" stroke="#8a8b90" />
                                <path d="M1 8Q1 14 5 14Q8 14 10 11Q12 8.500 15 8.500Q19 8.500 19 14" fill="none" stroke="#fff" strokeWidth="2.400" />
                            </svg>
                            <ToolCount>3</ToolCount>
                        </ToolButton>
                    </ToolDock>
                </ChartColumn>

                <TradePanel>
                    <Field>
                        <FieldTop>
                            <FieldLabel htmlFor="time">Tiempo <FaQuestionCircle size={9} /></FieldLabel>
                            <FieldValue $gap="3px">
                                <svg width="14" height="14" viewBox="0 0 14 14" fill="none" stroke="#97989c" strokeWidth="1.800">
                                    <circle cx="7" cy="7" r="6" />
                                    <path d="M7.500 3.500V7.500H4" strokeWidth="1.400" />
                                </svg>
                                <input id="time" value={time} onChange={e => setTime(e.target.value)} />
                            </FieldValue>
                        </FieldTop>
                        <StepButton aria-label="Menos tiempo">-</StepButton>
                        <StepButton aria-label="Más tiempo">+</StepButton>
                    </Field>
                    <Field>
                        <FieldTop>
                            <FieldLabel htmlFor="amount">Importe <FaQuestionCircle size={9} /></FieldLabel>
                            <FieldValue $gap="7px">
                                $<input id="amount" value={amount} onChange={e => setAmount(e.target.value)} />
                            </FieldValue>
                        </FieldTop>
                        <StepButton aria-label="Menos importe">-</StepButton>
                        <StepButton aria-label="Más importe">+</StepButton>
                    </Field>
                    <Income>
                        <IncomeLabel>Ingreso <FaQuestionCircle size={9} /></IncomeLabel>
                        <IncomeValue>+<b>63</b>%</IncomeValue>
                        +$0.63
                    </Income>
                    <TradeButton $up><TrendIcon up />SUBE</TradeButton>
                    <TradeButton><TrendIcon />BAJA</TradeButton>
                </TradePanel>
            </Body>

            <Footer>
                <Support><ChatIcon size={17} />SOPORTE</Support>
                CADA DIA, TODO EL DIA
                <FooterRight>
                    <svg width="20" height="16" viewBox="0 0 20 16" aria-label="Sonido">
                        <path d="M0 5H3L8.500 1V15L3 11H0Z" fill="currentColor" />
                        <path d="M11 5Q13 8 11 11M13 3Q17 8 13 13M15.500 1Q21 8 15.500 15" fill="none" stroke="currentColor" strokeWidth="1.300" />
                    </svg>
                    <GearIcon size={16} />
                    <Clock>HORA ACTUAL: <b>23 SEPTIEMBRE, 18:45:41</b> (UTC-4)</Clock>
                    <svg width="17" height="17" viewBox="0 0 17 17" fill="none" stroke="currentColor" strokeWidth="2" aria-label="Pantalla completa">
                        <path d="M2 2L6.500 6.500M15 2L10.500 6.500M2 15L6.500 10.500M15 15L10.500 10.500" />
                        <path d="M0 0H6L0 6ZM17 0V6L11 0ZM17 17H11L17 11ZM0 17V11L6 17Z" fill="currentColor" stroke="none" />
                    </svg>
                </FooterRight>
            </Footer>
        </Page>
    )
}

export default App
